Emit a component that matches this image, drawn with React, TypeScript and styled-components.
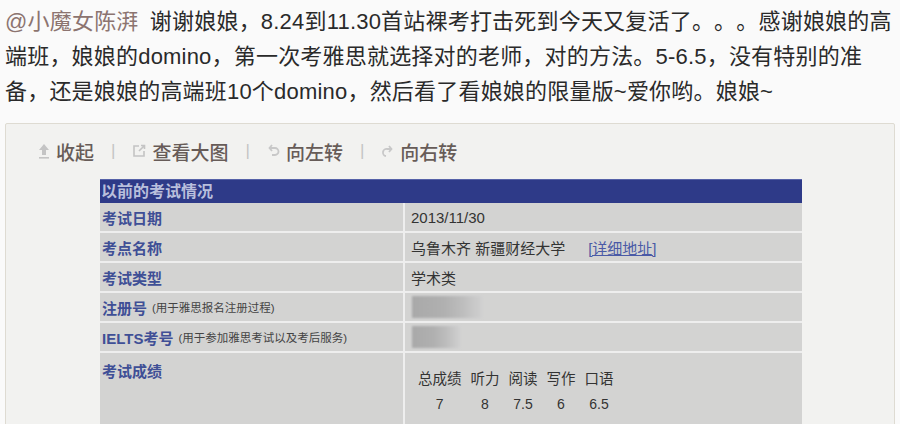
import styled, { createGlobalStyle } from "styled-components";

const GlobalStyle = createGlobalStyle`
    html, body {
        margin: 0;
        padding: 0;
        background: #fafafa;
        overflow: hidden;
    }
    body {
        font-family: "Liberation Sans", "Noto Sans CJK SC", sans-serif;
        text-spacing-trim: space-all;
    }
`;

const Page = styled.div`
    width: 900px;
    height: 424px;
    overflow: hidden;
    padding: 0 5px;
    box-sizing: border-box;
`;

const PostText = styled.div`
    padding-top: 4px;
    font-size: 22px;
    line-height: 35px;
    color: #2a2a2a;
    letter-spacing: 0.2px;
    white-space: nowrap;
`;

const Line = styled.div``;

const Mention = styled.span`
    color: #8c7470;
    margin-right: 5px;
`;

const Card = styled.div`
    margin-top: 14px;
    background: #f2f2f0;
    border: 1px solid #dedbd2;
    border-radius: 2px;
    padding: 12px 0 0 32px;
    height: 320px;
    box-sizing: border-box;
`;

const Toolbar = styled.div`
    display: flex;
    align-items: center;
    height: 30px;
    font-size: 19px;
    font-weight: 500;
    color: #675c58;
`;

const ToolItem = styled.span`
    display: flex;
    align-items: center;
    gap: 6px;
    svg {
        display: block;
    }
`;

const Sep = styled.span`
    color: #c4c4c4;
    margin: 0 17px;
    font-size: 17px;
    font-weight: normal;
`;

const Table = styled.div`
    margin: 13px 0 0 62px;
    width: 702px;
    background: #d3d3d2;
`;

const HeaderBar = styled.div`
    height: 23px;
    background: #2e3a88;
    border-top: 1px solid #5662a8;
    color: #b9bfdc;
    font-size: 16px;
    font-weight: bold;
    line-height: 23px;
    padding-left: 1px;
`;

const Row = styled.div<{ $h?: number }>`
    display: grid;
    grid-template-columns: 305px 1fr;
    height: ${(p) => p.$h ?? 28}px;
    border-bottom: 2px solid #eeeeee;
`;

const Label = styled.div<{ $top?: boolean }>`
    border-right: 2px solid #eeeeee;
    display: flex;
    align-items: ${(p) => (p.$top ? "flex-start" : "center")};
    padding: ${(p) => (p.$top ? "7px 0 0 2px" : "0 0 0 2px")};
    font-size: 15px;
    font-weight: bold;
    color: #3f4f96;
    white-space: nowrap;
`;

const Note = styled.span`
    font-size: 11.5px;
    font-weight: normal;
    color: #444;
    margin-left: 5px;
`;

const Value = styled.div`
    display: flex;
    align-items: center;
    padding-left: 6px;
    font-size: 15px;
    color: #333;
`;

const Link = styled.span`
    color: #4a5aa6;
    text-decoration: underline;
    margin-left: 23px;
`;

const Blur = styled.div<{ $w: number }>`
    width: ${(p) => p.$w}px;
    height: 22px;
    background: linear-gradient(90deg, #a9a9a9 0%, #b0b0b0 45%, #bcbcbc 70%, #d0d0d0 100%);
    filter: blur(1px);
    margin-left: 1px;
`;

const Scores = styled.div`
    padding: 14px 0 0 13px;
    display: flex;
    align-items: flex-start;
    gap: 9px;
    font-size: 14.5px;
    color: #333;
`;

const ScoreCol = styled.div`
    display: flex;
    flex-direction: column;
    align-items: center;
    gap: 8px;
`;

const ScoreVal = styled.span`
    font-size: 14px;
`;

const UpIcon = () => (
    <svg width="12" height="16" viewBox="0 0 12 16">
        <path d="M6 1 L11 7 H8 V12 H4 V7 H1 Z" fill="#c4c4c4" />
        <rect x="1" y="14" width="10" height="1.6" fill="#c4c4c4" />
    </svg>
);

const OpenIcon = () => (
    <svg width="14" height="14" viewBox="0 0 14 14" fill="none" stroke="#c4c4c4" strokeWidth="1.6">
        <path d="M7 2 H2 V12 H12 V7" />
        <path d="M7 7 L12.5 1.5 M9 1.5 H12.5 V5" />
    </svg>
);

const RotateLeftIcon = () => (
    <svg width="13" height="14" viewBox="0 0 13 14" fill="none" stroke="#c8c8c8" strokeWidth="1.8">
        <path d="M3 4 H8 A3.5 3.5 0 0 1 8 11 H5" />
        <path d="M5 1 L2.5 4 L5 7" />
    </svg>
);

const RotateRightIcon = () => (
    <svg width="13" height="14" viewBox="0 0 13 14" fill="none" stroke="#c8c8c8" strokeWidth="1.8">
        <path d="M10 5 H6 A3.5 3.5 0 0 0 5 12" />
        <path d="M8 2 L10.5 5 L8 8" />
    </svg>
);

const scores = [
    { head: "总成绩", value: "7" },
    { head: "听力", value: "8" },
    { head: "阅读", value: "7.5" },
    { head: "写作", value: "6" },
    { head: "口语", value: "6.5" },
];

export default function App() {
    return (
        <Page>
            <GlobalStyle />
            <PostText>
                <Line>
                    <Mention>@小魔女陈湃</Mention> 谢谢娘娘，8.24到11.30首站裸考打击死到今天又复活了。。。感谢娘娘的高
                </Line>
                <Line>端班，娘娘的domino，第一次考雅思就选择对的老师，对的方法。5-6.5，没有特别的准</Line>
                <Line>备，还是娘娘的高端班10个domino，然后看了看娘娘的限量版~爱你哟。娘娘~</Line>
            </PostText>
            <Card>
                <Toolbar>
                    <ToolItem>
                        <UpIcon />
                        收起
                    </ToolItem>
                    <Sep>|</Sep>
                    <ToolItem>
                        <OpenIcon />
                        查看大图
                    </ToolItem>
                    <Sep>|</Sep>
                    <ToolItem>
                        <RotateLeftIcon />
                        向左转
                    </ToolItem>
                    <Sep>|</Sep>
                    <ToolItem>
                        <RotateRightIcon />
                        向右转
                    </ToolItem>
                </Toolbar>
                <Table>
                    <HeaderBar>以前的考试情况</HeaderBar>
                    <Row>
                        <Label>考试日期</Label>
                        <Value>2013/11/30</Value>
                    </Row>
                    <Row>
                        <Label>考点名称</Label>
                        <Value>
                            乌鲁木齐 新疆财经大学
                            <Link>[详细地址]</Link>
                        </Value>
                    </Row>
                    <Row>
                        <Label>考试类型</Label>
                        <Value>学术类</Value>
                    </Row>
                    <Row>
                        <Label>
                            注册号<Note>(用于雅思报名注册过程)</Note>
                        </Label>
                        <Value>
                            <Blur $w={70} />
                        </Value>
                    </Row>
                    <Row>
                        <Label>
                            IELTS考号<Note>(用于参加雅思考试以及考后服务)</Note>
                        </Label>
                        <Value>
                            <Blur $w={48} />
                        </Value>
                    </Row>
                    <Row $h={100}>
                        <Label $top>考试成绩</Label>
                        <Scores>
                            {scores.map((s) => (
                                <ScoreCol key={s.head}>
                                    <span>{s.head}</span>
                                    <ScoreVal>{s.value}</ScoreVal>
                                </ScoreCol>
                            ))}
                        </Scores>
                    </Row>
                </Table>
            </Card>
        </Page>
    );
}
